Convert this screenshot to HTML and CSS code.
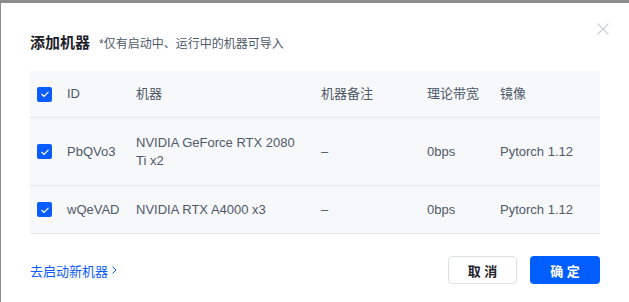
FILE: index.html
```html
<!DOCTYPE html>
<html lang="zh">
<head>
<meta charset="utf-8">
<link rel="stylesheet" href="styles.css">
</head>
<body>
<div class="modal">
  <div class="head">
    <span class="title">添加机器</span>
    <span class="sub">*仅有启动中、运行中的机器可导入</span>
    <svg class="close" width="12" height="12" viewBox="0 0 12 12"><path d="M0.5 0.5L11.5 11.5M11.5 0.5L0.5 11.5" stroke="#c9cdd4" stroke-width="1.1" fill="none"/></svg>
  </div>
  <div class="table">
    <div class="row thead">
      <div class="c ck"><span class="box"><svg width="10" height="8" viewBox="0 0 10 8"><path d="M1.5 4L4 6.3L8.5 1.8" stroke="#fff" stroke-width="1.2" fill="none"/></svg></span></div>
      <div class="c id">ID</div>
      <div class="c m">机器</div>
      <div class="c note">机器备注</div>
      <div class="c bw">理论带宽</div>
      <div class="c img">镜像</div>
    </div>
    <div class="row r1">
      <div class="c ck"><span class="box"><svg width="10" height="8" viewBox="0 0 10 8"><path d="M1.5 4L4 6.3L8.5 1.8" stroke="#fff" stroke-width="1.2" fill="none"/></svg></span></div>
      <div class="c id">PbQVo3</div>
      <div class="c m">NVIDIA GeForce RTX 2080 Ti x2</div>
      <div class="c note">–</div>
      <div class="c bw">0bps</div>
      <div class="c img">Pytorch 1.12</div>
    </div>
    <div class="row">
      <div class="c ck"><span class="box"><svg width="10" height="8" viewBox="0 0 10 8"><path d="M1.5 4L4 6.3L8.5 1.8" stroke="#fff" stroke-width="1.2" fill="none"/></svg></span></div>
      <div class="c id">wQeVAD</div>
      <div class="c m">NVIDIA RTX A4000 x3</div>
      <div class="c note">–</div>
      <div class="c bw">0bps</div>
      <div class="c img">Pytorch 1.12</div>
    </div>
  </div>
  <div class="foot">
    <a class="link">去启动新机器 <svg width="7" height="10" viewBox="0 0 7 10"><path d="M1.5 1.5L5 5L1.5 8.5" stroke="#0a5cff" stroke-width="1" fill="none"/></svg></a>
    <div class="btns">
      <button class="btn cancel">取 消</button>
      <button class="btn ok">确 定</button>
    </div>
  </div>
</div>
</body>
</html>
```
FILE: styles.css
```css
html, body {
  margin: 0;
  padding: 0;
}
body {
  width: 629px;
  height: 302px;
  overflow: hidden;
  background: #fff;
  border-top: 3px solid #8c8c8c;
  box-sizing: border-box;
  font-family: "Liberation Sans", "Noto Sans CJK SC", sans-serif;
  position: relative;
}
body::before {
  content: "";
  position: absolute;
  left: 0;
  top: 0;
  width: 1px;
  height: 100%;
  background: #8c8c8c;
}
.modal {
  margin-left: 1px;
  width: 624px;
  height: 299px;
  background: #fff;
  border-radius: 8px 8px 0 0;
  box-sizing: border-box;
  padding: 0 25px 0 29px;
  position: relative;
}
.head {
  display: flex;
  align-items: baseline;
  padding-top: 28px;
  height: 68px;
  box-sizing: border-box;
}
.title {
  font-size: 15px;
  font-weight: bold;
  color: #1d2129;
}
.sub {
  font-size: 12px;
  color: #4e5969;
  margin-left: 9px;
}
.close {
  position: absolute;
  right: 16px;
  top: 20px;
}
.table {
  background: #f7f8fa;
}
.row {
  display: grid;
  grid-template-columns: 37px 69px 185px 106px 73px 1fr;
  align-items: center;
  border-bottom: 1px solid #e5e6eb;
  font-size: 13px;
  line-height: 18px;
  color: #4e5969;
  min-height: 47px;
}
.thead {
  min-height: 46px;
}
.r1 {
  min-height: 67px;
}
.c {
  padding-right: 20px;
}
.ck {
  padding-left: 7px;
  padding-right: 0;
  display: flex;
  align-items: center;
}
.box {
  width: 15px;
  height: 15px;
  border-radius: 2px;
  background: #0a5cff;
  display: flex;
  align-items: center;
  justify-content: center;
}
.foot {
  display: flex;
  justify-content: space-between;
  align-items: center;
  margin-top: 22px;
}
.link {
  color: #0a5cff;
  font-size: 13px;
  display: flex;
  align-items: center;
  gap: 3px;
}
.btns {
  display: flex;
  gap: 13px;
}
.btn {
  width: 70px;
  height: 28px;
  border-radius: 4px;
  font-family: "Liberation Sans", "Noto Sans CJK SC", sans-serif;
  font-size: 13px;
  font-weight: bold;
  padding: 0;
}
.cancel {
  width: 69px;
  background: #fff;
  border: 1px solid #dcdfe6;
  color: #1d2129;
}
.ok {
  background: #005eff;
  border: none;
  color: #fff;
}
```
